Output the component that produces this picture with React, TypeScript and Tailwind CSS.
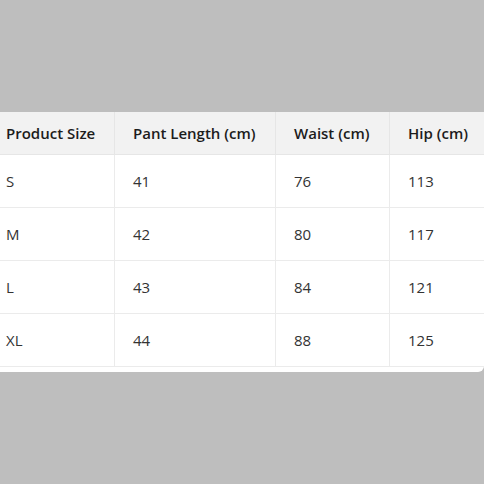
const headers = ['Product Size', 'Pant Length (cm)', 'Waist (cm)', 'Hip (cm)'];

const rows = [
  ['S', '41', '76', '113'],
  ['M', '42', '80', '117'],
  ['L', '43', '84', '121'],
  ['XL', '44', '88', '125'],
];

export default function App() {
  return (
    <div className="flex h-screen w-full items-center bg-[#bebebe] font-['Open_Sans',sans-serif]">
      <div className="w-full overflow-hidden rounded-br-md bg-white pb-[5px]">
        <div className="grid grid-cols-[115px_161px_114px_1fr]">
          {headers.map((h, i) => (
            <div
              key={h}
              className={`flex h-[43px] items-center border-b border-[#e6e6e6] bg-[#f2f2f2] text-[15px] font-semibold text-[#1c1c1c] ${
                i === 0 ? 'pl-[6px]' : 'pl-[18px]'
              } ${i < 3 ? 'border-r' : ''}`}
            >
              {h}
            </div>
          ))}
          {rows.map((row) =>
            row.map((cell, i) => (
              <div
                key={row[0] + i}
                className={`flex h-[53px] items-center border-b border-[#ebebeb] text-[15px] text-[#333333] ${
                  i === 0 ? 'pl-[6px]' : 'pl-[18px]'
                } ${i < 3 ? 'border-r' : ''}`}
              >
                {cell}
              </div>
            ))
          )}
        </div>
      </div>
    </div>
  );
}
